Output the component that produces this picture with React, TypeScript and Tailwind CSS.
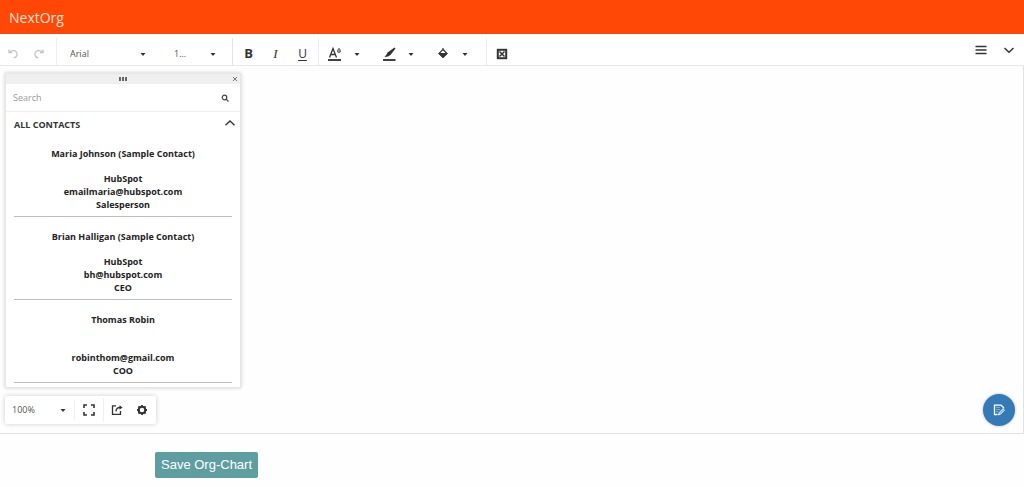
import type { ReactNode } from "react";
import { useState } from "react";

interface Contact {
  name: string;
  company: string;
  email: string;
  title: string;
}

const contacts: Contact[] = [
  {
    name: "Maria Johnson (Sample Contact)",
    company: "HubSpot",
    email: "emailmaria@hubspot.com",
    title: "Salesperson",
  },
  {
    name: "Brian Halligan (Sample Contact)",
    company: "HubSpot",
    email: "bh@hubspot.com",
    title: "CEO",
  },
  {
    name: "Thomas Robin",
    company: "",
    email: "robinthom@gmail.com",
    title: "COO",
  },
];

function Caret() {
  return (
    <svg className="w-1.5 h-1.5 shrink-0 text-[#333]" viewBox="0 0 6 6" fill="currentColor">
      <path d="M0.5 2h5L3 5z" />
    </svg>
  );
}

interface SelectProps {
  label: string;
  options: string[];
  className: string;
}

function ToolSelect({ label, options, className }: SelectProps) {
  return (
    <div className={`flex items-center ${className}`}>
      <select
        aria-label={label}
        className="min-w-0 flex-1 appearance-none bg-transparent text-[9px] leading-4 text-[#555] outline-none"
      >
        {options.map((o) => (
          <option key={o}>{o}</option>
        ))}
      </select>
      <Caret />
    </div>
  );
}

interface ToolButtonProps {
  label: string;
  className?: string;
  children: ReactNode;
}

function ToolButton({ label, className = "w-[27px]", children }: ToolButtonProps) {
  return (
    <button
      type="button"
      aria-label={label}
      className={`flex h-6 items-center justify-center text-[#333] ${className}`}
    >
      {children}
    </button>
  );
}

function Toolbar() {
  return (
    <div className="flex h-8 items-center border-b border-[#e8e8e8] bg-white pt-1">
      <div className="flex h-full items-center border-r border-[#eee] pt-1 pr-1">
        <ToolButton label="Undo" className="w-[26px]">
          <svg className="w-3 h-3 text-[#c4c4c4]" viewBox="0 0 12 12" fill="none" stroke="currentColor" strokeWidth="1.3">
            <path d="M2 1.5v3.2h3.2M2.3 4.5C4 2.5 7 1.9 9 3.6c2 1.9 1.3 5.6-2.2 6.3" />
          </svg>
        </ToolButton>
        <ToolButton label="Redo" className="w-[26px]">
          <svg className="w-3 h-3 text-[#c4c4c4]" viewBox="0 0 12 12" fill="none" stroke="currentColor" strokeWidth="1.3">
            <path d="M10 1.5v3.2H6.8M9.7 4.5C8 2.5 5 1.9 3 3.6c-2 1.9-1.3 5.6 2.2 6.3" />
          </svg>
        </ToolButton>
      </div>

      <div className="flex h-full items-center gap-7 border-r border-[#e4e4e4] pt-1 pl-[13px] pr-4">
        <ToolSelect label="Font" options={["Arial"]} className="w-[76px]" />
        <ToolSelect label="Font size" options={["1..."]} className="w-[42px]" />
      </div>

      <div className="flex h-full items-center border-r border-[#eee] px-0.5 pt-1">
        <ToolButton label="Bold">
          <span className="text-[13px] font-bold">B</span>
        </ToolButton>
        <ToolButton label="Italic">
          <span className="font-['Liberation_Serif',serif] text-[13px] italic">I</span>
        </ToolButton>
        <ToolButton label="Underline">
          <span className="text-[12px] underline underline-offset-2">U</span>
        </ToolButton>
      </div>

      <div className="flex h-full items-center gap-[21px] border-r border-[#eee] pt-1 pl-2 pr-[18px]">
        <ToolButton label="Text color" className="gap-[11px]">
          <svg className="w-4 h-4" viewBox="0 0 16 16" fill="none" stroke="currentColor">
            <path d="M2.5 11.5L6 2.5l3.5 9M3.7 8.5h4.6" strokeWidth="1.3" />
            <path d="M12 2.2c-1 1.3-1.6 2-1.6 2.8a1.6 1.6 0 0 0 3.2 0c0-.8-.6-1.5-1.6-2.8z" fill="#999" stroke="#555" strokeWidth=".8" />
            <path d="M1 14h13" stroke="#111" strokeWidth="1.6" />
          </svg>
          <Caret />
        </ToolButton>
        <ToolButton label="Line color" className="gap-[11px]">
          <svg className="w-4 h-4" viewBox="0 0 16 16" fill="currentColor">
            <path d="M13.5 1.5l1 1L9.5 9 7 10.5 3.5 11l2-2.5 1-2z" />
            <path d="M2 13.2h12.5v1.6H2z" fill="#111" />
          </svg>
          <Caret />
        </ToolButton>
        <ToolButton label="Fill color" className="gap-[11px]">
          <svg className="w-4 h-4" viewBox="0 0 16 16" fill="none" stroke="currentColor">
            <path d="M8 3.5l4 4-4 4-4-4 4-4V2" strokeWidth="1.2" />
            <path d="M4 7.5h8l-4 4z" fill="currentColor" />
          </svg>
          <Caret />
        </ToolButton>
      </div>

      <div className="flex h-full items-center pt-1">
        <ToolButton label="Delete" className="w-[30px]">
          <svg className="w-3 h-3" viewBox="0 0 12 12" fill="none" stroke="currentColor">
            <rect x="1.8" y="1.8" width="8.4" height="8.4" strokeWidth="2" />
            <path d="M3.5 3.5l5 5m0-5l-5 5" strokeWidth="1.5" />
          </svg>
        </ToolButton>
      </div>

      <div className="ml-auto flex h-full items-center pb-1">
        <ToolButton label="Menu">
          <svg className="w-3 h-3" viewBox="0 0 12 12" fill="none" stroke="currentColor" strokeWidth="1.4">
            <path d="M.5 2.500h11M.5 6h11M.5 9.500h11" />
          </svg>
        </ToolButton>
        <ToolButton label="Collapse toolbar" className="w-[30px]">
          <svg className="w-3 h-3" viewBox="0 0 12 12" fill="none" stroke="currentColor" strokeWidth="1.4">
            <path d="M1.500 4L6 8.300 10.500 4" />
          </svg>
        </ToolButton>
      </div>
    </div>
  );
}

function ContactItem({ contact }: { contact: Contact }) {
  return (
    <li className="border-b border-[#bdbdbd] pt-[13px] pb-[5px] text-center text-[9px] leading-[13px] font-bold text-[#222]">
      <p className="mb-3">{contact.name}</p>
      <p className="h-[13px]">{contact.company}</p>
      <p>{contact.email}</p>
      <p>{contact.title}</p>
    </li>
  );
}

function ContactsPanel() {
  const [open, setOpen] = useState(true);

  return (
    <section className="w-[236px] border border-[#e6e6e6] bg-white pb-1 shadow-[0_0_4px_rgba(0,0,0,0.2)]">
      <div className="flex h-2.5 items-center justify-between bg-[#efefef] px-0.5">
        <span className="w-1.5" />
        <svg className="w-2 h-1" viewBox="0 0 8 4" fill="#666">
          <path d="M0 0h2v4H0zM3 0h2v4H3zM6 0h2v4H6z" />
        </svg>
        <button type="button" aria-label="Close" className="flex w-1.5 justify-center">
          <svg className="w-1.5 h-1.5" viewBox="0 0 6 6" stroke="#777">
            <path d="M1 1l4 4m0-4L1 5" />
          </svg>
        </button>
      </div>

      <div className="flex h-7 items-center border-b border-[#eee] pl-[7px] pr-[11px]">
        <input
          type="text"
          aria-label="Search"
          placeholder="Search"
          className="min-w-0 flex-1 text-[9px] leading-4 outline-none placeholder:text-[#999]"
        />
        <button type="button" aria-label="Run search">
          <svg className="w-2 h-2" viewBox="0 0 8 8" fill="none" stroke="#444" strokeWidth="1.2">
            <circle cx="3.5" cy="3.5" r="2.3" />
            <path d="M5.200 5.200l2.300 2.300" />
          </svg>
        </button>
      </div>

      <button
        type="button"
        aria-expanded={open}
        onClick={() => setOpen(!open)}
        className="flex h-[26px] w-full items-center justify-between pl-2 pr-1 text-[9px] font-bold text-[#333]"
      >
        ALL CONTACTS
        <svg
          className={`mb-1 w-3 h-3 ${open ? "" : "rotate-180"}`}
          viewBox="0 0 12 12"
          fill="none"
          stroke="currentColor"
          strokeWidth="1.4"
        >
          <path d="M1.500 8.300L6 4l4.500 4.300" />
        </svg>
      </button>

      {open && (
        <ul className="-mt-1 px-2">
          {contacts.map((c) => (
            <ContactItem key={c.email} contact={c} />
          ))}
        </ul>
      )}
    </section>
  );
}

function ViewToolbar() {
  return (
    <div className="flex h-7 items-center rounded-xs bg-white pl-[7px] pr-0.5 shadow-[0_0_5px_rgba(0,0,0,0.2)]">
      <ToolSelect label="Zoom" options={["100%"]} className="w-[54px]" />
      <div className="ml-2 flex h-5 items-center border-l border-[#f0f0f0]">
        <ToolButton label="Fit to screen" className="w-7">
          <svg className="w-3 h-3" viewBox="0 0 12 12" fill="none" stroke="currentColor" strokeWidth="1.6">
            <path d="M1 4V1h3M8 1h3v3M11 8v3H8M4 11H1V8" />
          </svg>
        </ToolButton>
        <ToolButton label="Export" className="w-[27px] border-l border-[#f0f0f0]">
          <svg className="w-3 h-3" viewBox="0 0 12 12" fill="none" stroke="currentColor" strokeWidth="1.3">
            <path d="M5 1.800H1.500v8.500h8V7M5 7.500C5 5 6.500 3.500 9 3.500" />
            <path d="M8.500 1.200v4.600L11.500 3.500z" fill="currentColor" stroke="none" />
          </svg>
        </ToolButton>
        <ToolButton label="Settings" className="w-6">
          <svg className="w-3 h-3" viewBox="0 0 12 12" fill="none" stroke="currentColor">
            <circle cx="6" cy="6" r="3.3" strokeWidth="2.1" />
            <path d="M6 1v1.500M6 9.500V11M1 6h1.500M9.500 6H11M2.400 2.400l1.100 1.100M8.500 8.500l1.100 1.100M2.400 9.600l1.100-1.100M8.500 3.500l1.100-1.100" strokeWidth="1.8" />
          </svg>
        </ToolButton>
      </div>
    </div>
  );
}

export default function App() {
  return (
    <div className="min-h-screen bg-[#fefefe] font-['Open_Sans',sans-serif]">
      <header className="flex h-[34px] items-center bg-[#ff4706] pl-[9px] pt-0.5">
        <h1 className="text-[14px] leading-5 text-[#ffe4d6]">NextOrg</h1>
      </header>

      <Toolbar />

      <main className="flex flex-col items-start gap-2 border-r border-b border-[#e2e2e2] pt-[7px] pl-[5px] pr-2 pb-[9px]">
        <ContactsPanel />
        <div className="flex w-full items-center justify-between">
          <ViewToolbar />
          <button
            type="button"
            aria-label="Edit chart"
            className="-my-1 flex size-8 items-center justify-center rounded-full bg-[#337ab7] text-white shadow-[0_0_3px_rgba(0,0,0,0.3)]"
          >
            <svg className="w-3 h-3" viewBox="0 0 12 12" fill="none" stroke="currentColor" strokeWidth="1.3">
              <path d="M4.500 10.500h-3V1.200h6.500l2.500 2.300v1" />
              <path d="M3 3.500h4M3 5.500h4M3 7.500h2" strokeWidth=".8" stroke="#8fb8dc" />
              <path d="M5.500 11l.5-2.300 4-4 1.500 1.500-4 4z" fill="#8fb8dc" strokeWidth=".8" />
            </svg>
          </button>
        </div>
      </main>

      <footer className="px-[155px] pt-[17px]">
        <button
          type="button"
          className="h-[26px] rounded-xs bg-[#5f9ea0] px-1.5 font-['Liberation_Sans',sans-serif] text-[13px] leading-5 text-white"
        >
          Save Org-Chart
        </button>
      </footer>
    </div>
  );
}
